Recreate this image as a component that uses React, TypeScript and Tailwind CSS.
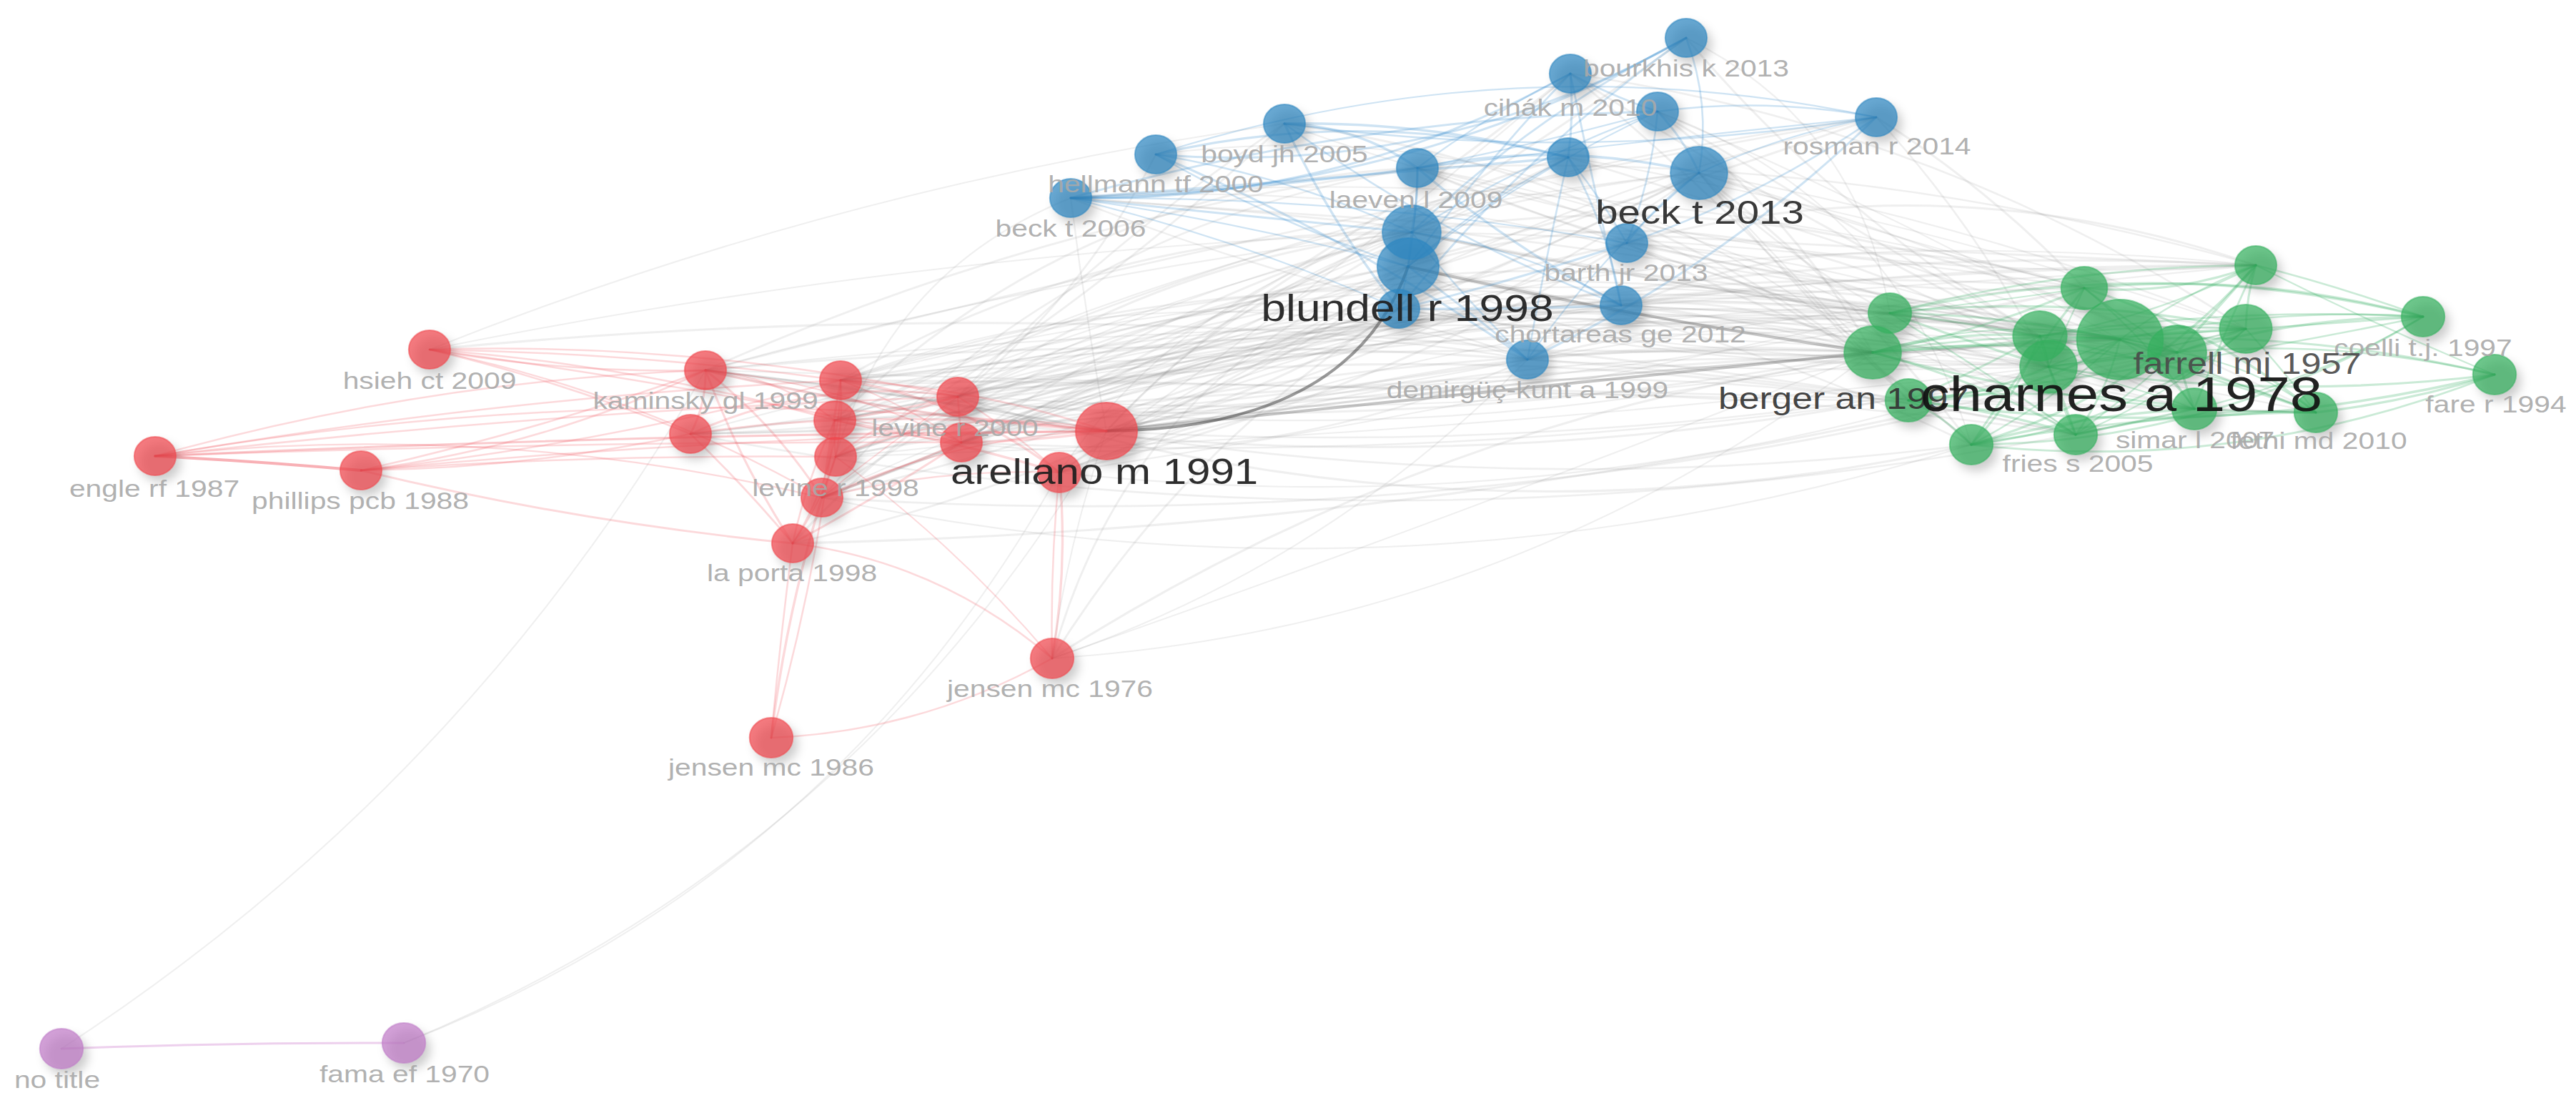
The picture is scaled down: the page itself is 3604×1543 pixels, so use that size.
type Cluster = "red" | "blue" | "green" | "purple";
type Node = { id: string; c: Cluster; x: number; y: number; r: number; w: number; ext?: number };
type Label = { t: string; x: number; y: number; size: number; color: string; start?: boolean };

const NODES: Node[] = [
  // red cluster
  { id: "hsieh", c: "red", x: 601, y: 489, r: 27, w: 0.08, ext: 0.12 },
  { id: "engle", c: "red", x: 217, y: 638, r: 27, w: 0.05, ext: 0 },
  { id: "phillips", c: "red", x: 505, y: 658, r: 27, w: 0.08, ext: 0.05 },
  { id: "kaminsky", c: "red", x: 987, y: 518, r: 27, w: 0.8 },
  { id: "r5", c: "red", x: 966, y: 607, r: 27, w: 0.8 },
  { id: "r6", c: "red", x: 1176, y: 532, r: 27, w: 0.9 },
  { id: "r7", c: "red", x: 1168, y: 588, r: 27, w: 0.9 },
  { id: "levine98", c: "red", x: 1169, y: 639, r: 27, w: 0.9 },
  { id: "r9", c: "red", x: 1150, y: 696, r: 27, w: 0.8 },
  { id: "laporta", c: "red", x: 1109, y: 760, r: 27, w: 0.7 },
  { id: "levine00", c: "red", x: 1340, y: 555, r: 27, w: 0.9 },
  { id: "r12", c: "red", x: 1345, y: 619, r: 27, w: 0.9 },
  { id: "arellano", c: "red", x: 1548, y: 603, r: 40, w: 1 },
  { id: "r14", c: "red", x: 1482, y: 661, r: 28, w: 0.8 },
  { id: "jensen76", c: "red", x: 1472, y: 921, r: 28, w: 0.05, ext: 0.15 },
  { id: "jensen86", c: "red", x: 1079, y: 1032, r: 28, w: 0.02, ext: 0 },
  // blue cluster
  { id: "bourkhis", c: "blue", x: 2359, y: 53, r: 27, w: 0.5 },
  { id: "cihak", c: "blue", x: 2197, y: 103, r: 27, w: 0.6 },
  { id: "b3", c: "blue", x: 2319, y: 156, r: 27, w: 0.6 },
  { id: "boyd", c: "blue", x: 1797, y: 173, r: 27, w: 0.6 },
  { id: "hellmann", c: "blue", x: 1617, y: 216, r: 27, w: 0.6 },
  { id: "beck06", c: "blue", x: 1498, y: 277, r: 27, w: 0.6 },
  { id: "laeven", c: "blue", x: 1983, y: 235, r: 27, w: 0.8 },
  { id: "b8", c: "blue", x: 2194, y: 220, r: 27, w: 0.8 },
  { id: "beck13", c: "blue", x: 2377, y: 242, r: 37, w: 1 },
  { id: "rosman", c: "blue", x: 2625, y: 164, r: 27, w: 0.5 },
  { id: "blundellA", c: "blue", x: 1975, y: 325, r: 38, w: 1 },
  { id: "blundell", c: "blue", x: 1970, y: 373, r: 40, w: 1 },
  { id: "b13", c: "blue", x: 1957, y: 432, r: 27, w: 0.8 },
  { id: "barth", c: "blue", x: 2276, y: 340, r: 27, w: 0.8 },
  { id: "chortareas", c: "blue", x: 2268, y: 427, r: 27, w: 0.8 },
  { id: "demirguc", c: "blue", x: 2137, y: 503, r: 27, w: 0.8 },
  // green cluster
  { id: "g1", c: "green", x: 3156, y: 371, r: 27, w: 0.6 },
  { id: "g2", c: "green", x: 2916, y: 403, r: 30, w: 0.8 },
  { id: "g3", c: "green", x: 2644, y: 438, r: 28, w: 0.8 },
  { id: "coelli", c: "green", x: 3390, y: 443, r: 28, w: 0.4, ext: 0.1 },
  { id: "berger", c: "green", x: 2620, y: 493, r: 37, w: 1 },
  { id: "g6", c: "green", x: 2854, y: 470, r: 35, w: 0.9 },
  { id: "charnes", c: "green", x: 2966, y: 475, r: 56, w: 1 },
  { id: "farrell", c: "green", x: 3142, y: 460, r: 34, w: 0.8 },
  { id: "g9", c: "green", x: 2866, y: 513, r: 37, w: 0.9 },
  { id: "g10", c: "green", x: 3046, y: 493, r: 38, w: 0.9 },
  { id: "fare", c: "green", x: 3490, y: 524, r: 28, w: 0.3, ext: 0 },
  { id: "g12", c: "green", x: 2670, y: 560, r: 30, w: 0.8 },
  { id: "simar", c: "green", x: 3070, y: 572, r: 29, w: 0.6 },
  { id: "fethi", c: "green", x: 3240, y: 577, r: 28, w: 0.5 },
  { id: "fries", c: "green", x: 2904, y: 608, r: 28, w: 0.6 },
  { id: "g16", c: "green", x: 2758, y: 622, r: 28, w: 0.6 },
  // purple cluster
  { id: "notitle", c: "purple", x: 86, y: 1467, r: 28, w: 0.1 },
  { id: "fama", c: "purple", x: 565, y: 1459, r: 28, w: 0.1 },
];

const SMALL = "#a9a9a9";

const LABELS: Label[] = [
  { t: "hsieh ct 2009", x: 601, y: 544, size: 34, color: SMALL },
  { t: "engle rf 1987", x: 216, y: 695, size: 34, color: SMALL },
  { t: "phillips pcb 1988", x: 504, y: 712, size: 34, color: SMALL },
  { t: "kaminsky gl 1999", x: 987, y: 572, size: 34, color: SMALL },
  { t: "levine r 1998", x: 1169, y: 694, size: 34, color: SMALL },
  { t: "la porta 1998", x: 1108, y: 813, size: 34, color: SMALL },
  { t: "levine r 2000", x: 1336, y: 610, size: 34, color: SMALL },
  { t: "jensen mc 1976", x: 1469, y: 975, size: 34, color: SMALL },
  { t: "jensen mc 1986", x: 1079, y: 1085, size: 34, color: SMALL },
  { t: "bourkhis k 2013", x: 2359, y: 107, size: 34, color: SMALL },
  { t: "cihák m 2010", x: 2197, y: 162, size: 34, color: SMALL },
  { t: "boyd jh 2005", x: 1797, y: 227, size: 34, color: SMALL },
  { t: "hellmann tf 2000", x: 1617, y: 269, size: 34, color: SMALL },
  { t: "beck t 2006", x: 1498, y: 331, size: 34, color: SMALL },
  { t: "laeven l 2009", x: 1981, y: 291, size: 34, color: SMALL },
  { t: "rosman r 2014", x: 2626, y: 216, size: 34, color: SMALL },
  { t: "barth jr 2013", x: 2275, y: 393, size: 34, color: SMALL },
  { t: "chortareas ge 2012", x: 2267, y: 479, size: 34, color: SMALL },
  { t: "demirgüç-kunt a 1999", x: 2137, y: 557, size: 34, color: SMALL },
  { t: "coelli t.j. 1997", x: 3390, y: 498, size: 34, color: SMALL },
  { t: "fare r 1994", x: 3492, y: 577, size: 34, color: SMALL },
  { t: "simar l 2007", x: 3071, y: 627, size: 34, color: SMALL },
  { t: "fethi md 2010", x: 3244, y: 628, size: 34, color: SMALL },
  { t: "fries s 2005", x: 2907, y: 660, size: 34, color: SMALL },
  { t: "no title", x: 80, y: 1522, size: 34, color: SMALL },
  { t: "fama ef 1970", x: 566, y: 1514, size: 34, color: SMALL },
  { t: "berger an 1997", x: 2404, y: 572, size: 43, color: "#333333", start: true },
  { t: "farrell mj 1957", x: 3144, y: 523, size: 42, color: "#4a4a4a" },
  { t: "arellano m 1991", x: 1545, y: 677, size: 50, color: "#1e1e1e" },
  { t: "blundell r 1998", x: 1969, y: 449, size: 52, color: "#1e1e1e" },
  { t: "beck t 2013", x: 2378, y: 313, size: 47, color: "#2a2a2a" },
  { t: "charnes a 1978", x: 2968, y: 575, size: 68, color: "#111111" },
];

const FILL: Record<Cluster, string> = {
  red: "#f0474d",
  blue: "#2e86c1",
  green: "#34b05e",
  purple: "#c07bc8",
};

const EDGE: Record<Cluster, string> = {
  red: "rgba(240,80,90,0.22)",
  blue: "rgba(50,140,205,0.24)",
  green: "rgba(50,175,95,0.26)",
  purple: "rgba(215,150,215,0.45)",
};

const GRAY = "rgba(120,120,120,0.12)";

function rng(seed: number) {
  return () => {
    seed = (seed + 0x6d2b79f5) | 0;
    let t = Math.imul(seed ^ (seed >>> 15), 1 | seed);
    t = (t + Math.imul(t ^ (t >>> 7), 61 | t)) ^ t;
    return ((t ^ (t >>> 14)) >>> 0) / 4294967296;
  };
}

// quadratic link, bent sideways by k * length (capped)
function curve(a: { x: number; y: number }, b: { x: number; y: number }, k: number) {
  const mx = (a.x + b.x) / 2;
  const my = (a.y + b.y) / 2;
  const dx = b.x - a.x;
  const dy = b.y - a.y;
  const len = Math.hypot(dx, dy) || 1;
  const off = Math.max(-220, Math.min(220, k * len));
  return `M${a.x} ${a.y} Q${mx + (dy / len) * off} ${my - (dx / len) * off} ${b.x} ${b.y}`;
}

type Edge = { d: string; stroke: string; w: number };

const byId: Record<string, Node> = Object.fromEntries(NODES.map((n) => [n.id, n]));

function buildEdges() {
  const rand = rng(11);
  const gray: Edge[] = [];
  const colored: Edge[] = [];
  const intra: Record<Cluster, number> = { red: 0.7, blue: 0.75, green: 0.85, purple: 1 };
  for (let i = 0; i < NODES.length; i++) {
    for (let j = i + 1; j < NODES.length; j++) {
      const a = NODES[i];
      const b = NODES[j];
      if (a.c === "purple" || b.c === "purple") {
        if (a.c === b.c) colored.push({ d: curve(a, b, 0.01), stroke: EDGE.purple, w: 3 });
        continue;
      }
      const k = (rand() - 0.35) * 0.4;
      if (a.c === b.c) {
        if (rand() < intra[a.c] * Math.sqrt(a.w * b.w)) {
          colored.push({ d: curve(a, b, k * 0.6), stroke: EDGE[a.c], w: 2 + rand() * 1.5 });
        }
      } else {
        const pair = [a.c, b.c].sort().join("-");
        const p = pair === "blue-green" ? 0.5 : pair === "blue-red" ? 0.42 : 0.38;
        const wa = a.ext ?? a.w;
        const wb = b.ext ?? b.w;
        if (rand() < p * wa * wb) {
          gray.push({ d: curve(a, b, k), stroke: GRAY, w: 2 + rand() * 1.2 });
        }
      }
    }
  }
  const extra: [string, string, number, string, number][] = [
    ["engle", "phillips", 0.01, "rgba(240,80,90,0.45)", 4],
    ["engle", "r6", 0.03, EDGE.red, 2.5],
    ["engle", "kaminsky", 0.06, EDGE.red, 2.5],
    ["engle", "levine00", 0.02, EDGE.red, 2.5],
    ["engle", "r12", 0.01, EDGE.red, 2.5],
    ["engle", "arellano", 0.01, "rgba(240,80,90,0.3)", 3],
    ["phillips", "kaminsky", -0.08, EDGE.red, 2.5],
    ["phillips", "r5", -0.05, EDGE.red, 2.5],
    ["phillips", "r6", -0.04, EDGE.red, 2.5],
    ["phillips", "levine98", 0.02, EDGE.red, 2.5],
    ["phillips", "arellano", 0.02, EDGE.red, 2.5],
    ["hsieh", "kaminsky", -0.05, EDGE.red, 2.5],
    ["hsieh", "r6", 0.03, EDGE.red, 2.5],
    ["hsieh", "r7", 0.05, EDGE.red, 2.5],
    ["hsieh", "r5", 0.04, EDGE.red, 2.5],
    ["hsieh", "levine00", 0.06, EDGE.red, 2.5],
    ["hsieh", "r12", 0.02, EDGE.red, 2.5],
    ["hsieh", "boyd", 0.06, GRAY, 2],
    ["hsieh", "blundellA", 0.04, GRAY, 2],
    ["arellano", "berger", 0.0, "rgba(90,90,90,0.35)", 4],
    ["arellano", "charnes", 0.02, "rgba(110,110,110,0.25)", 3],
    ["blundell", "berger", -0.02, "rgba(90,90,90,0.35)", 4],
    ["blundellA", "charnes", -0.03, "rgba(110,110,110,0.25)", 3],
    ["kaminsky", "arellano", 0.02, "rgba(110,110,110,0.22)", 3],
    ["jensen76", "laporta", -0.15, EDGE.red, 2.5],
    ["jensen76", "jensen86", 0.12, EDGE.red, 2.5],
    ["jensen76", "r14", 0.03, EDGE.red, 2.5],
    ["jensen76", "levine98", -0.06, EDGE.red, 2],
    ["jensen76", "arellano", 0.05, GRAY, 2],
    ["jensen76", "demirguc", -0.12, GRAY, 2],
    ["jensen76", "berger", -0.15, GRAY, 2],
    ["jensen86", "laporta", 0.01, EDGE.red, 2.5],
    ["jensen86", "r7", -0.04, EDGE.red, 2.5],
    ["notitle", "kaminsky", -0.12, GRAY, 2],
    ["fama", "r14", -0.18, GRAY, 2],
    ["fama", "arellano", -0.22, GRAY, 2],
  ];
  for (const [s, t, k, stroke, w] of extra) {
    const e = { d: curve(byId[s], byId[t], k), stroke, w };
    if (stroke === GRAY || stroke.startsWith("rgba(90") || stroke.startsWith("rgba(110")) gray.push(e);
    else colored.push(e);
  }
  return { gray, colored };
}

const EDGES = buildEdges();
const SX = 1.2;
const NODE_SX = 1.08;

export default function App() {
  const a = byId.arellano;
  const b = byId.blundell;
  return (
    <div className="h-[1543px] w-[3604px] overflow-hidden bg-white">
      <svg
        width={3604}
        height={1543}
        viewBox="0 0 3604 1543"
        fontFamily='"Liberation Sans", Arial, sans-serif'
      >
        <defs>
          <filter id="shadow" x="-50%" y="-50%" width="200%" height="200%">
            <feGaussianBlur stdDeviation="7" />
          </filter>
        </defs>

        {/* links */}
        <g fill="none" strokeLinecap="round">
          {EDGES.gray.map((e, i) => (
            <path key={`g${i}`} d={e.d} stroke={e.stroke} strokeWidth={e.w} />
          ))}
          <path
            d={`M${a.x} ${a.y} Q${1890} ${600} ${b.x} ${b.y}`}
            stroke="rgba(70,70,70,0.55)"
            strokeWidth={4}
          />
          {EDGES.colored.map((e, i) => (
            <path key={`c${i}`} d={e.d} stroke={e.stroke} strokeWidth={e.w} />
          ))}
        </g>

        {/* shadows */}
        <g filter="url(#shadow)" fill="rgba(0,0,0,0.2)">
          {NODES.map((n) => (
            <ellipse key={n.id} cx={n.x + 7} cy={n.y + 9} rx={n.r * NODE_SX} ry={n.r} />
          ))}
        </g>

        {/* items */}
        <g>
          {NODES.map((n) => (
            <ellipse
              key={n.id}
              cx={n.x}
              cy={n.y}
              rx={n.r * NODE_SX}
              ry={n.r}
              fill={FILL[n.c]}
              fillOpacity={0.72}
              stroke={FILL[n.c]}
              strokeOpacity={0.55}
              strokeWidth={2}
            />
          ))}
        </g>

        {/* labels */}
        <g>
          {LABELS.map((l) => (
            <text
              key={l.t}
              transform={`translate(${l.x} ${l.y}) scale(${SX} 1)`}
              textAnchor={l.start ? "start" : "middle"}
              fontSize={l.size}
              fill={l.color}
              fillOpacity={0.93}
            >
              {l.t}
            </text>
          ))}
        </g>
      </svg>
    </div>
  );
}
